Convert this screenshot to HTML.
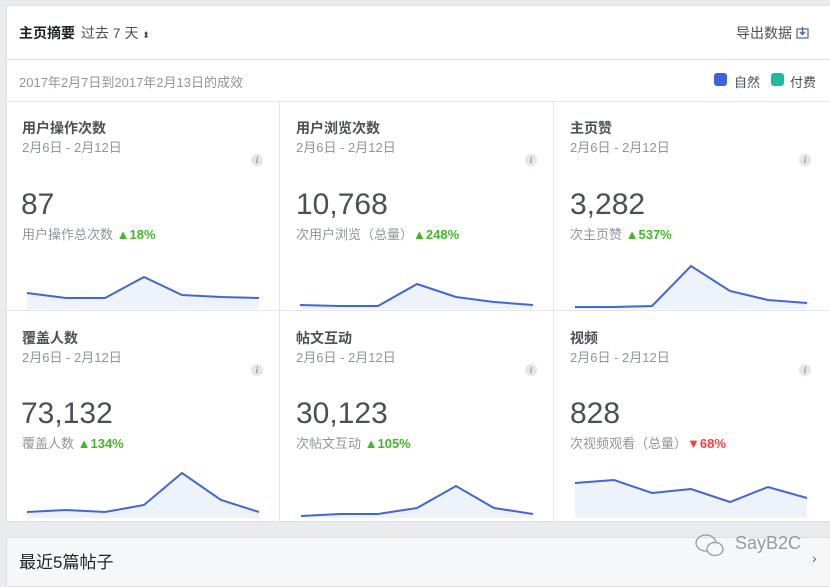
<!DOCTYPE html>
<html><head><meta charset="utf-8"><style>
*{margin:0;padding:0;box-sizing:border-box}
body{width:830px;height:582px;background:#e9ebee;font-family:"Liberation Sans","Noto Sans CJK SC",sans-serif;position:relative;overflow:hidden;color:#4b4f56}
.card{position:absolute;left:6px;top:5px;width:830px;height:517px;background:#fff;border:1px solid #dddfe2}
.a{position:absolute;white-space:nowrap}
.t{font-size:14px;font-weight:bold;color:#4b4f56}
.d{font-size:13px;color:#90949c}
.n{font-size:30px;color:#4b4f56}
.s{font-size:13px;color:#90949c}
.up{color:#42b72a;font-weight:bold}
.dn{color:#fa3e3e;font-weight:bold}
.i{width:12px;height:12px;border-radius:50%;background:#e4e6eb;color:#8d949e;font-size:9px;font-style:italic;font-weight:bold;text-align:center;line-height:12px;font-family:"Liberation Serif",serif}
</style></head><body>
<div class="card"></div>
<div class="a" style="left:19px;top:23px;font-size:14px;font-weight:bold;color:#1d2129">主页摘要 <span style="font-weight:normal;color:#4b4f56;margin-left:2px">过去 7 天 <span style="font-size:9px">⬍</span></span></div>
<div class="a" style="left:736px;top:23px;font-size:14px;color:#4b4f56">导出数据 <svg width="13" height="12" viewBox="0 0 13 12" style="vertical-align:-1px"><rect x="1" y="2" width="11" height="9" fill="none" stroke="#4b67a1" stroke-width="1.2"/><path d="M6.5 0v7M4 5l2.5 2.5L9 5" fill="none" stroke="#4b67a1" stroke-width="1.4"/></svg></div>
<div class="a" style="left:7px;top:59px;width:823px;height:1px;background:#dddfe2"></div>
<div class="a" style="left:19px;top:72px;font-size:13px;color:#90949c">2017年2月7日到2017年2月13日的成效</div>
<div class="a" style="left:714px;top:73px;width:13px;height:13px;border-radius:3px;background:#3b64d8"></div>
<div class="a" style="left:734px;top:72px;font-size:13px;color:#4b4f56">自然</div>
<div class="a" style="left:771px;top:73px;width:13px;height:13px;border-radius:3px;background:#1fba9b"></div>
<div class="a" style="left:790px;top:72px;font-size:13px;color:#4b4f56">付费</div>
<div class="a" style="left:7px;top:101px;width:823px;height:1px;background:#e5e5e5"></div>
<div class="a" style="left:7px;top:310px;width:823px;height:1px;background:#e5e5e5"></div>
<div class="a" style="left:279px;top:101px;width:1px;height:421px;background:#e5e5e5"></div>
<div class="a" style="left:553px;top:101px;width:1px;height:421px;background:#e5e5e5"></div>

<div class="a t" style="left:22px;top:118px">用户操作次数</div><div class="a d" style="left:22px;top:137px">2月6日 - 2月12日</div><div class="a i" style="left:251px;top:154px">i</div>
<div class="a n" style="left:21px;top:188px">87</div><div class="a s" style="left:22px;top:224px">用户操作总次数 <span class="up">▲18%</span></div>
<div class="a t" style="left:296px;top:118px">用户浏览次数</div><div class="a d" style="left:296px;top:137px">2月6日 - 2月12日</div><div class="a i" style="left:525px;top:154px">i</div>
<div class="a n" style="left:296px;top:188px">10,768</div><div class="a s" style="left:296px;top:224px">次用户浏览（总量）<span class="up">▲248%</span></div>
<div class="a t" style="left:570px;top:118px">主页赞</div><div class="a d" style="left:570px;top:137px">2月6日 - 2月12日</div><div class="a i" style="left:799px;top:154px">i</div>
<div class="a n" style="left:570px;top:188px">3,282</div><div class="a s" style="left:570px;top:224px">次主页赞 <span class="up">▲537%</span></div>

<div class="a t" style="left:22px;top:328px">覆盖人数</div><div class="a d" style="left:22px;top:347px">2月6日 - 2月12日</div><div class="a i" style="left:251px;top:364px">i</div>
<div class="a n" style="left:21px;top:397px">73,132</div><div class="a s" style="left:22px;top:433px">覆盖人数 <span class="up">▲134%</span></div>
<div class="a t" style="left:296px;top:328px">帖文互动</div><div class="a d" style="left:296px;top:347px">2月6日 - 2月12日</div><div class="a i" style="left:525px;top:364px">i</div>
<div class="a n" style="left:296px;top:397px">30,123</div><div class="a s" style="left:296px;top:433px">次帖文互动 <span class="up">▲105%</span></div>
<div class="a t" style="left:570px;top:328px">视频</div><div class="a d" style="left:570px;top:347px">2月6日 - 2月12日</div><div class="a i" style="left:799px;top:364px">i</div>
<div class="a n" style="left:570px;top:397px">828</div><div class="a s" style="left:570px;top:433px">次视频观看（总量）<span class="dn">▼68%</span></div>

<svg class="a" style="left:0;top:0" width="830" height="582">
<g fill="#eef2fb" stroke="none">
<path d="M27 293L66 298L105 298L144 277L182 295L221 297L259 298V309H27Z"/>
<path d="M300 305L339 306L378 306L417 284L456 297L494 302L533 305V309H300Z"/>
<path d="M575 307L614 307L652 306L691 266L730 291L768 300L807 303V309H575Z"/>
<path d="M27 512L66 510L105 512L144 505L182 473L221 500L259 512V518H27Z"/>
<path d="M301 516L340 514L378 514L417 508L456 486L494 508L533 514V518H301Z"/>
<path d="M575 483L614 480L652 493L691 489L730 502L768 487L807 498V518H575Z"/>
</g>
<g fill="none" stroke="#4267d4" stroke-width="2">
<path d="M27 293L66 298L105 298L144 277L182 295L221 297L259 298"/>
<path d="M300 305L339 306L378 306L417 284L456 297L494 302L533 305"/>
<path d="M575 307L614 307L652 306L691 266L730 291L768 300L807 303"/>
<path d="M27 512L66 510L105 512L144 505L182 473L221 500L259 512"/>
<path d="M301 516L340 514L378 514L417 508L456 486L494 508L533 514"/>
<path d="M575 483L614 480L652 493L691 489L730 502L768 487L807 498"/>
</g>
</svg>

<div class="a" style="left:6px;top:537px;width:830px;height:50px;background:#f6f7f9;border:1px solid #dddfe2"></div>
<div class="a" style="left:19px;top:548px;font-size:17px;color:#1d2129">最近5篇帖子</div>
<svg class="a" style="left:693px;top:532px" width="40" height="28"><g fill="none" stroke="#999" stroke-width="1.3"><ellipse cx="13" cy="11" rx="10" ry="8"/><ellipse cx="22" cy="17" rx="8" ry="6.5" fill="#f6f7f9"/></g></svg>
<div class="a" style="left:735px;top:533px;font-size:18px;color:#9a9a9a">SayB2C</div>
<div class="a" style="left:812px;top:550px;font-size:14px;color:#606770">›</div>
</body></html>
